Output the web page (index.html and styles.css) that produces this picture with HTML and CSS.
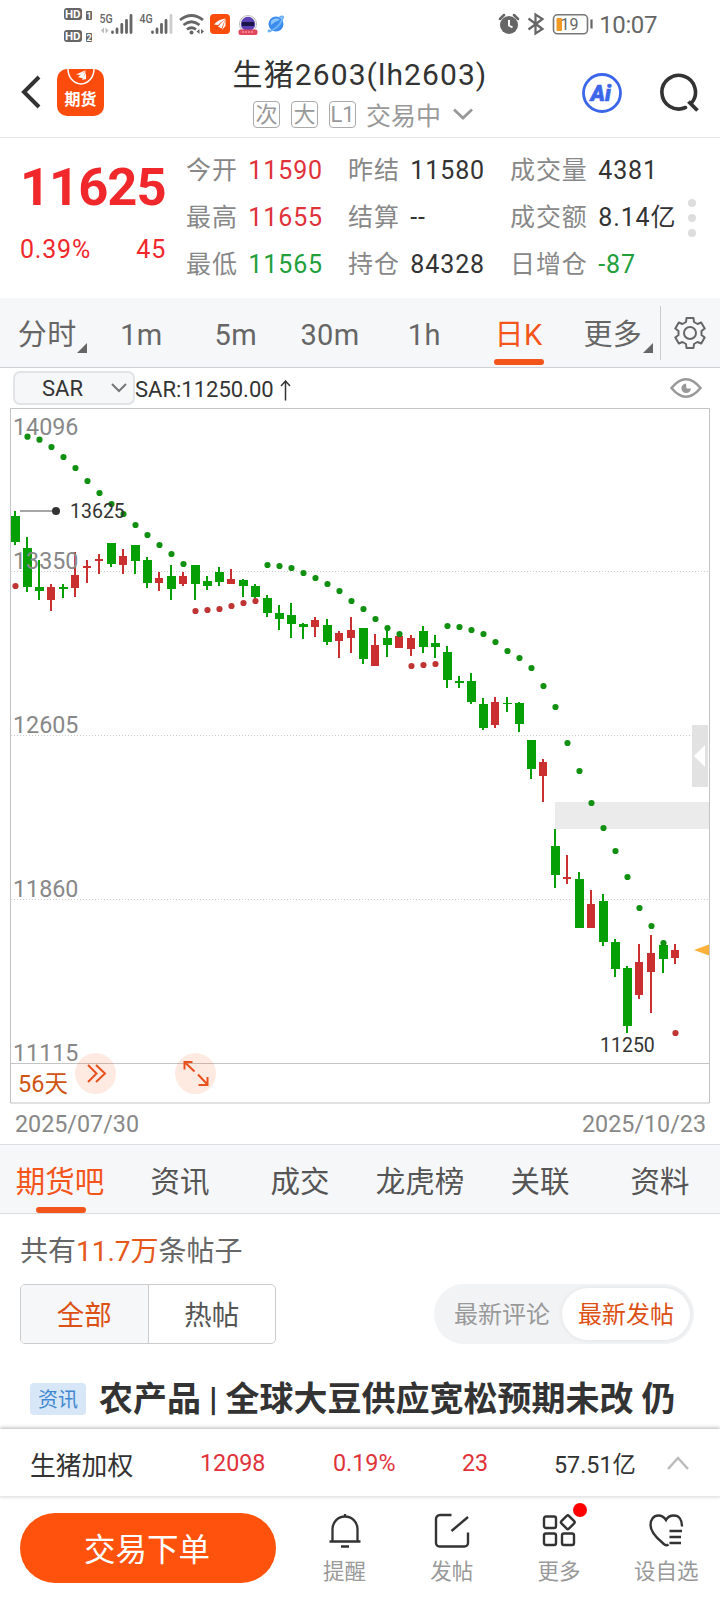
FILE: index.html
```html
<!DOCTYPE html>
<html lang="zh-CN">
<head>
    <meta charset="UTF-8">
    <meta name="viewport" content="width=device-width, initial-scale=1.0">
    <title>生猪2603(lh2603)</title>
    <link rel="stylesheet" href="styles.css">
</head>
<body>
    <div class="status-bar">
        <svg class="status-left" width="226" height="34" viewBox="62 6 226 34">
            <g fill="#666">
                <rect x="64" y="8" width="18" height="12" rx="3"/>
                <rect x="64" y="30" width="18" height="12" rx="3"/>
                <rect x="86" y="11" width="6" height="9" rx="1"/>
                <rect x="86" y="33" width="6" height="9" rx="1"/>
            </g>
            <g class="hd-text">
                <text x="65" y="18">HD</text>
                <text x="65" y="40">HD</text>
            </g>
            <g class="sim-text">
                <text x="86.500" y="18.500">1</text>
                <text x="86.500" y="40.500">2</text>
            </g>
            <text class="net-text" transform="translate(99.500 23) scale(.78 1)">5G</text>
            <text class="net-text" transform="translate(139.500 23) scale(.78 1)">4G</text>
            <g stroke="#666" stroke-width="2.800" stroke-linecap="round">
                <path d="M112.500 32.500v-.5M117 32.500v-3.500M121.800 32.500v-8M126.500 32.500v-12M131 32.500v-17"/>
                <path d="M152.500 32.500v-.5M157 32.500v-3.500M161.500 32.500v-8M166 32.500v-12"/>
                <path d="M171 32.500v-17" stroke="#ccc"/>
            </g>
            <path d="M104 27.500v6l-3-3zM105.500 33.500v-6l3 3z" fill="#bbb"/>
            <g fill="none" stroke="#666" stroke-width="2.800">
                <path d="M180 20q11.500-9 23 0"/>
                <path d="M183.500 25q8-6.500 16 0"/>
                <path d="M187 29.500q4.500-3.500 9 0"/>
            </g>
            <circle cx="191.500" cy="32.500" r="2" fill="#666"/>
            <path d="M199.500 29v5l-3-2.500zM201 34v-5l3 2.500z" fill="#666"/>
            <rect x="210" y="14" width="20" height="20" rx="4" fill="#fa4d0c"/>
            <path d="M214 24.500q4-5 11.500-6L218 25zM218 26.500l7.500-8-4 10zM222 30l3.500-11v7z" fill="#fff"/>
            <circle cx="248" cy="24" r="8.500" fill="#fff" stroke="#bbb"/>
            <circle cx="248" cy="24" r="7.200" fill="#5b41b4"/>
            <path d="M242 24h12" stroke="#191648" stroke-width="4"/>
            <rect x="238.500" y="29.500" width="19" height="5.500" rx="2" fill="#e4485c"/>
            <path d="M242 32h12" stroke="#f7b5bd" stroke-dasharray="2 1"/>
            <circle cx="276" cy="24" r="7.500" fill="#3c8cf0"/>
            <path d="M269.500 29.500q-3 4 4 0t9-11q2-3-3-1.500" fill="none" stroke="#6fb2f6" stroke-width="2"/>
            <path d="M271 21q5-5 9-1-5 1-9 5z" fill="#8cc6fa"/>
        </svg>
        <div class="status-right">
            <svg width="96" height="24" viewBox="498 12 96 24">
                <circle cx="509" cy="25" r="9" fill="#666"/>
                <path d="M500 19l4-4M518 19l-4-4" stroke="#666" stroke-width="2.500" stroke-linecap="round"/>
                <path d="M509 20v5.500l3.500 2" fill="none" stroke="#fff" stroke-width="2"/>
                <path d="M528.500 18.500l14 10.500-7 4.500V14.500l7 4.500-14 10.500" fill="none" stroke="#666" stroke-width="2.200"/>
                <rect x="553.500" y="14.800" width="34" height="19" rx="4" fill="none" stroke="#777" stroke-width="1.600"/>
                <rect x="556.500" y="18" width="5.500" height="13" rx="1" fill="#f29a26"/>
                <path d="M591.500 19.500v9" stroke="#666" stroke-width="2.200"/>
                <text class="battery-text" x="560.500" y="30">19</text>
            </svg>
            <span class="clock">10:07</span>
        </div>
    </div>

    <header class="header">
        <div class="header-left">
            <svg width="22" height="36" viewBox="0 0 22 36"><path d="M19 3L4 18l15 15" fill="none" stroke="#333" stroke-width="4"/></svg>
            <div class="logo">
                <svg width="28" height="17" viewBox="0 0 28 17">
                    <path d="M1 0a13 15 0 0 0 26 0" fill="none" stroke="#fff" stroke-width="1.500"/>
                    <path d="M9 5.500L19 1l-5 5zM11 8l8-6-3 7.500zM15 11l4-7v6z" fill="#fff"/>
                </svg>
                <span>期货</span>
            </div>
        </div>
        <div class="header-title">
            <h1>生猪2603(lh2603)</h1>
            <div class="subtitle">
                <span class="badge">次</span>
                <span class="badge">大</span>
                <span class="badge">L1</span>
                <span class="state">交易中</span>
                <svg width="20" height="12" viewBox="0 0 20 12"><path d="M1 1.500l9 8.500 9-8.500" fill="none" stroke="#999" stroke-width="2.800"/></svg>
            </div>
        </div>
        <div class="header-right">
            <svg width="40" height="40" viewBox="0 0 40 40">
                <circle cx="20" cy="20" r="18.500" fill="none" stroke="#3c66ea" stroke-width="2.800"/>
                <text class="ai-text" x="8.500" y="27.500">Ai</text>
            </svg>
            <svg width="40" height="40" viewBox="0 0 40 40">
                <path d="M25.500 34.500A16.800 16.800 0 1 1 31.500 30" fill="none" stroke="#333" stroke-width="3.600" stroke-linecap="round"/>
                <path d="M28.500 28.500l9 9" stroke="#333" stroke-width="3.800"/>
            </svg>
        </div>
    </header>

    <section class="quote">
        <div class="price">
            <div class="price-now">11625</div>
            <div class="price-change"><span>0.39%</span><span>45</span></div>
        </div>
        <dl class="quote-grid">
            <div><dt>今开</dt><dd class="up">11590</dd></div>
            <div><dt>昨结</dt><dd>11580</dd></div>
            <div><dt>成交量</dt><dd>4381</dd></div>
            <div><dt>最高</dt><dd class="up">11655</dd></div>
            <div><dt>结算</dt><dd>--</dd></div>
            <div><dt>成交额</dt><dd>8.14亿</dd></div>
            <div><dt>最低</dt><dd class="down">11565</dd></div>
            <div><dt>持仓</dt><dd>84328</dd></div>
            <div><dt>日增仓</dt><dd class="down">-87</dd></div>
        </dl>
        <div class="dots"><i></i><i></i><i></i></div>
    </section>

    <nav class="periods">
        <div class="period-list">
            <span class="has-menu">分时</span>
            <span>1m</span>
            <span>5m</span>
            <span>30m</span>
            <span>1h</span>
            <span class="active">日K</span>
            <span class="has-menu">更多</span>
        </div>
        <div class="settings">
            <svg width="32" height="34" viewBox="-16 -17 32 34" fill="none" stroke="#666" stroke-width="2" stroke-linejoin="round">
                <path d="M-4-11L-3.500-15H3.500L4-11L7.500-9L11.200-10.500L14.700-4.500L11.500-2V2L14.700 4.500L11.200 10.500L7.500 9L4 11L3.500 15H-3.500L-4 11L-7.500 9L-11.200 10.500L-14.700 4.500L-11.500 2V-2L-14.700-4.500L-11.200-10.500L-7.500-9Z"/>
                <circle r="6"/>
            </svg>
        </div>
    </nav>

    <div class="indicator">
        <div class="indicator-select">
            <span>SAR</span>
            <svg width="16" height="10" viewBox="0 0 16 10"><path d="M1 1l7 7 7-7" fill="none" stroke="#777" stroke-width="2"/></svg>
        </div>
        <span class="indicator-value">SAR:11250.00</span>
        <svg class="arrow-up" width="11" height="21" viewBox="0 0 11 21"><path d="M5.500 20.500V1M1 6L5.500 1 10 6" fill="none" stroke="#333" stroke-width="1.500"/></svg>
        <svg class="eye" width="32" height="20" viewBox="0 0 32 20">
            <path d="M1.500 10Q16-7.500 30.500 10 16 27.500 1.500 10z" fill="none" stroke="#999" stroke-width="2.500"/>
            <path d="M16 5.500a4.800 4.800 0 1 0 5 5h-4.500z" fill="#999"/>
        </svg>
    </div>

    <svg class="chart" id="chart" width="720" height="696" viewBox="0 408 720 696">
        <g stroke="#ccc" stroke-dasharray="1 2">
            <path d="M11 571.500h698M11 735.500h698M11 899.500h698"/>
        </g>
        <rect x="555" y="802" width="154" height="27" fill="#ebebeb"/>
        <path d="M10.500 408.500h699v694.500h-699zM10.500 1063.500h699" fill="none" stroke="#c4c4c4"/>
        <g id="candles"></g>
        <g id="sar"></g>
        <g class="axis-text">
            <text x="13" y="434.500">14096</text>
            <text x="13" y="569">13350</text>
            <text x="13" y="732.500">12605</text>
            <text x="13" y="896.500">11860</text>
            <text x="13" y="1061">11115</text>
        </g>
        <path d="M20 511h36" stroke="#888" stroke-width="1.500"/>
        <circle cx="56" cy="511" r="4" fill="#333"/>
        <text class="mark-text" x="70" y="518">13625</text>
        <text class="mark-text" x="600" y="1051.500">11250</text>
        <rect x="692" y="725" width="16" height="62" fill="#e2e2e2"/>
        <path d="M694 756l11-11v22z" fill="#fff"/>
        <path d="M694 950l15-5.500v11z" fill="#fbb03b"/>
        <text class="days-text" x="18" y="1091.500">56天</text>
        <circle cx="95.500" cy="1073.500" r="20.500" fill="#ff520d" fill-opacity=".12"/>
        <circle cx="195.500" cy="1073.500" r="20.500" fill="#ff520d" fill-opacity=".12"/>
        <g fill="none" stroke="#e8501c" stroke-width="2">
            <path d="M88 1065l8.500 8.500-8.500 8.500M96 1065l9 8.500-9 8.500"/>
            <path d="M184.500 1069.500v-7.500h8M184.500 1062l10 9.500M198 1074.500l9 9.500M207.500 1077v8h-9"/>
        </g>
    </svg>
    <div class="dates"><span>2025/07/30</span><span>2025/10/23</span></div>

    <nav class="tabs">
        <span class="active">期货吧</span>
        <span>资讯</span>
        <span>成交</span>
        <span>龙虎榜</span>
        <span>关联</span>
        <span>资料</span>
    </nav>

    <section class="posts">
        <div class="post-count">共有<em>11.7万</em>条帖子</div>
        <div class="filters">
            <div class="segment"><span class="active">全部</span><span>热帖</span></div>
            <div class="sort"><span>最新评论</span><span class="active">最新发帖</span></div>
        </div>
        <div class="post"><span class="tag">资讯</span><h2>农产品 | 全球大豆供应宽松预期未改 仍</h2></div>
    </section>

    <div class="ticker">
        <span>生猪加权</span>
        <span class="up">12098</span>
        <span class="up">0.19%</span>
        <span class="up">23</span>
        <span>57.51亿</span>
        <svg width="22" height="14" viewBox="0 0 22 14"><path d="M1 13L11 2l10 11" fill="none" stroke="#bbb" stroke-width="2.500"/></svg>
    </div>

    <footer class="actions">
        <button class="trade">交易下单</button>
        <div class="action">
            <svg width="36" height="36" viewBox="0 0 36 36" fill="none" stroke="#333" stroke-width="2.300">
                <path d="M18 1v3M5.500 28V16a12.500 12.500 0 0 1 25 0v12M2.500 28.500h31M14 33.500h8"/>
            </svg>
            <span>提醒</span>
        </div>
        <div class="action">
            <svg width="36" height="36" viewBox="0 0 36 36" fill="none" stroke="#333" stroke-width="2.400">
                <path d="M17.500 2H6a4 4 0 0 0-4 4v24a3.500 3.500 0 0 0 3.500 3.500h25A3.500 3.500 0 0 0 34 30V19.500M17.500 18L34 4"/>
            </svg>
            <span>发帖</span>
        </div>
        <div class="action more">
            <svg width="36" height="36" viewBox="0 0 36 36" fill="none" stroke="#333" stroke-width="2.400">
                <rect x="3" y="3.500" width="12" height="11.500" rx="2"/>
                <rect x="3" y="20.500" width="12" height="11.500" rx="2"/>
                <rect x="21" y="20.500" width="12" height="11.500" rx="2"/>
                <rect x="21.500" y="4" width="10.500" height="10.500" rx="1.500" transform="rotate(45 26.800 9.300)"/>
            </svg>
            <span>更多</span>
        </div>
        <div class="action">
            <svg width="36" height="36" viewBox="0 0 36 36" fill="none" stroke="#333" stroke-width="2.400">
                <path d="M34 13.500C34 6 30.500 2.500 26 2.500c-4 0-6.500 1.500-8 4.500C16 4 14 2.500 10.500 2.500 5.500 2.500 2.500 6.500 2.500 12c0 9 10 16 14 19.500q2 1.500 4 0M21.500 18H34M21.500 24H33M21.500 30H33"/>
            </svg>
            <span>设自选</span>
        </div>
    </footer>

    <script src="chart.js"></script>
</body>
</html>
```
FILE: styles.css
```css
* {
    box-sizing: border-box;
}
body {
    margin: 0;
    width: 720px;
    height: 1600px;
    overflow: hidden;
    display: flex;
    flex-direction: column;
    background: #fff;
    color: #333;
    font-family: Roboto, "Noto Sans CJK SC", sans-serif;
}
svg {
    display: block;
    flex: none;
}
.up {
    color: #e0323a;
}
.down {
    color: #21a03c;
}

/* status bar */
.status-bar {
    display: flex;
    justify-content: space-between;
    height: 48px;
    padding: 6px 63px 0 62px;
    color: #666;
}
.status-left {
    overflow: visible;
}
.status-right {
    display: flex;
    align-items: center;
    height: 36px;
    gap: 5px;
}
.clock {
    font-size: 24px;
    line-height: 36px;
    letter-spacing: -0.4px;
    padding-top: 2px;
}
.hd-text text {
    font: bold 11.5px Roboto, sans-serif;
    fill: #fff;
}
.sim-text text {
    font: bold 9px Roboto, sans-serif;
    fill: #fff;
}
.net-text {
    font: 500 13.5px Roboto, sans-serif;
    fill: #666;
}
.battery-text {
    font: 16px Roboto, sans-serif;
    fill: #666;
}

/* header */
.header {
    display: flex;
    justify-content: space-between;
    height: 90px;
    padding: 0 20px;
    border-bottom: 1px solid #e8e8e8;
}
.header-left {
    display: flex;
    align-items: center;
    gap: 15px;
    width: 150px;
    padding-bottom: 1px;
}
.logo {
    display: flex;
    flex-direction: column;
    align-items: center;
    width: 47px;
    height: 47px;
    border-radius: 10px;
    background: #fc4c0d;
}
.logo span {
    color: #fff;
    font-size: 16px;
    font-weight: bold;
    line-height: 28px;
}
.header-title {
    display: flex;
    flex-direction: column;
    align-items: center;
}
h1 {
    margin: 4px 0 0;
    font-size: 30px;
    font-weight: normal;
    line-height: 46px;
    letter-spacing: 1.1px;
}
.subtitle {
    display: flex;
    align-items: center;
    gap: 12px;
    height: 32px;
    padding-left: 6px;
    color: #999;
    font-size: 25px;
}
.badge {
    width: 27px;
    height: 27px;
    border: 1px solid #aaa;
    border-radius: 4px;
    font-size: 22px;
    line-height: 25px;
    text-align: center;
}
.badge + .badge {
    margin-left: -1px;
}
.state {
    margin-left: -2px;
}
.header-right {
    display: flex;
    justify-content: space-between;
    align-items: center;
    width: 118px;
    margin-left: 32px;
    padding-top: 1px;
}
.ai-text {
    font: italic 900 22px Roboto, sans-serif;
    fill: #3c66ea;
    stroke: #3c66ea;
    stroke-width: 0.6px;
}

/* quote */
.quote {
    display: flex;
    height: 160px;
}
.price {
    width: 166px;
    padding: 17px 0 0 20px;
    color: #f0282c;
}
.price-now {
    font-size: 52.5px;
    font-weight: bold;
    line-height: 64px;
    letter-spacing: -1px;
}
.price-change {
    display: flex;
    justify-content: space-between;
    margin-top: 13px;
    font-size: 25px;
    line-height: 36px;
    letter-spacing: 0.8px;
}
.quote-grid {
    display: grid;
    grid-template-columns: 162px 162px 170px;
    grid-auto-rows: 47px;
    margin: 9px 0 0 20px;
    font-size: 25px;
    line-height: 48px;
}
.quote-grid div {
    display: flex;
    gap: 10.5px;
    white-space: nowrap;
}
.quote-grid dt {
    color: #888;
    letter-spacing: 0.9px;
}
.quote-grid dd {
    margin: 0;
    letter-spacing: 0.9px;
}
.dots {
    display: flex;
    flex-direction: column;
    gap: 7px;
    padding-top: 61px;
    margin-left: 8px;
}
.dots i {
    width: 8px;
    height: 8px;
    border-radius: 50%;
    background: #ddd;
}

/* period tabs */
.periods {
    display: flex;
    height: 70px;
    background: #f6f7f9;
    border-bottom: 1px solid #cfd1d6;
    color: #666;
    font-size: 29px;
    line-height: 74px;
}
.period-list {
    display: grid;
    grid-template-columns: repeat(7, 1fr);
    width: 660px;
    text-align: center;
    letter-spacing: 0.4px;
}
.period-list span,
.tabs span {
    position: relative;
}
.has-menu::after {
    content: "";
    position: absolute;
    right: 7px;
    bottom: 19px;
    border-left: 10px solid transparent;
    border-bottom: 10px solid #666;
}
.periods .active,
.tabs .active {
    color: #f4551a;
}
.active::after {
    position: absolute;
    left: 50%;
    width: 50px;
    height: 6px;
    margin-left: -25px;
    border-radius: 3px;
    background: #f4551a;
}
.periods .active::after {
    content: "";
    bottom: 7px;
}
.settings {
    display: flex;
    align-items: center;
    justify-content: center;
    width: 60px;
    height: 54px;
    margin-top: 8px;
    padding-right: 2px;
    border-left: 1px solid #ccc;
}

/* indicator row */
.indicator {
    display: flex;
    align-items: flex-start;
    height: 40px;
    padding: 3px 18px 0 13px;
    font-size: 22px;
}
.indicator-select {
    display: flex;
    align-items: center;
    justify-content: space-between;
    width: 122px;
    height: 34px;
    padding: 0 6px 0 27px;
    border: 2px solid #e3e4e7;
    border-radius: 7px;
    background: #f6f7f9;
}
.indicator-value {
    line-height: 38px;
}
.arrow-up {
    margin: 9px 0 0 6px;
}
.eye {
    margin: 7px 0 0 auto;
}

/* chart */
.chart {
    font-family: Roboto, "Noto Sans CJK SC", sans-serif;
}
.axis-text {
    font-size: 23.3px;
    fill: #888;
}
.mark-text {
    font-size: 19.5px;
    fill: #333;
}
.days-text {
    font-size: 23.5px;
    fill: #d05514;
}
.dates {
    display: flex;
    justify-content: space-between;
    height: 40px;
    padding: 0 14px 0 15px;
    color: #888;
    font-size: 23.3px;
    line-height: 41px;
}

/* section tabs */
.tabs {
    display: grid;
    grid-template-columns: repeat(6, 1fr);
    height: 70px;
    background: #f6f7f9;
    border: 1px solid #dcdee2;
    border-width: 1px 0;
    color: #555;
    font-size: 29.5px;
    line-height: 75px;
    text-align: center;
}
.tabs .active::after {
    content: "";
    bottom: 7px;
    margin-left: -24px;
}

/* posts */
.posts {
    height: 215px;
    padding: 14px 20px 0;
    overflow: hidden;
}
.post-count {
    height: 46px;
    color: #666;
    font-size: 28px;
    line-height: 47px;
}
.post-count em {
    color: #e5581a;
    font-style: normal;
}
.filters {
    display: flex;
    justify-content: space-between;
    margin: 10px 6px 0 0;
}
.segment {
    display: flex;
    width: 256px;
    height: 60px;
    border: 1px solid #ccc;
    border-radius: 5px;
    overflow: hidden;
    color: #555;
    font-size: 27.5px;
    line-height: 62px;
    text-align: center;
}
.segment span {
    flex: 1;
}
.segment .active {
    border-right: 1px solid #ccc;
    background: #f6f7f9;
    color: #dd5013;
}
.sort {
    display: flex;
    width: 260px;
    height: 60px;
    padding: 4px;
    border-radius: 30px;
    background: #f2f3f5;
    color: #999;
    font-size: 24px;
    line-height: 54px;
    text-align: center;
}
.sort span {
    width: 124px;
    padding-left: 4px;
    flex: none;
}
.sort .active {
    width: 128px;
    padding: 0;
    border-radius: 26px;
    background: #fff;
    color: #dd5013;
    box-shadow: 0 0 5px rgba(0,0,0,0.08);
}
.post {
    display: flex;
    align-items: center;
    height: 58px;
    margin: 26px 0 0 10px;
}
.tag {
    width: 56px;
    height: 32px;
    border-radius: 4px;
    background: #d8e7f8;
    color: #4187d0;
    font-size: 20px;
    line-height: 34px;
    text-align: center;
}
h2 {
    margin: 0 0 0 13px;
    font-size: 34px;
    font-weight: bold;
    line-height: 50px;
    white-space: nowrap;
    word-spacing: -0.5px;
}

/* ticker */
.ticker {
    display: grid;
    grid-template-columns: 170px 133px 129px 92px 113px 22px;
    align-items: center;
    height: 68px;
    padding: 1px 0 0 30px;
    background: #fff;
    border-bottom: 1px solid #e6e8ea;
    box-shadow: 0 -1px 4px rgba(0,0,0,0.3);
    font-size: 23.3px;
    z-index: 1;
}
.ticker span:first-child {
    font-size: 25.8px;
}

/* bottom actions */
.actions {
    display: flex;
    height: 103px;
    padding: 16px 0 0 20px;
}
.trade {
    width: 256px;
    height: 70px;
    margin-right: 15px;
    padding: 0 2px 2px 0;
    border: none;
    border-radius: 35px;
    background: #ff520d;
    color: #fff;
    font-family: inherit;
    font-size: 31.5px;
}
.action {
    position: relative;
    display: flex;
    flex: 1;
    flex-direction: column;
    align-items: center;
    color: #999;
    font-size: 21.5px;
    line-height: 32px;
}
.action span {
    margin-top: 7px;
}
.more::after {
    content: "";
    position: absolute;
    left: 67px;
    top: -10px;
    width: 14px;
    height: 14px;
    border-radius: 50%;
    background: #f00;
}
```
FILE: chart.js
```js
const SVG_NS = 'http://www.w3.org/2000/svg';
const STEP = 12;
const FIRST_X = 15;
const GREEN = '#06a006';
const RED = '#cb3030';

// direction, high, body top, body bottom, low
const candles = [
    ['g', 511, 516, 542, 545], ['g', 537, 548, 587, 592], ['g', 560, 587, 591, 600], ['r', 584, 587, 600, 611],
    ['g', 584, 587, 589, 598], ['r', 552, 575, 588, 597], ['r', 560, 566, 568, 583], ['r', 554, 559, 561, 574],
    ['g', 543, 543, 564, 567], ['r', 549, 556, 565, 574], ['g', 545, 545, 561, 574], ['g', 557, 560, 583, 588],
    ['r', 572, 578, 583, 591], ['g', 565, 576, 589, 600], ['r', 572, 576, 584, 586], ['g', 565, 565, 584, 600],
    ['g', 576, 581, 586, 590], ['g', 567, 572, 582, 586], ['r', 569, 579, 584, 584], ['g', 579, 580, 586, 597],
    ['g', 584, 586, 597, 600], ['g', 595, 598, 613, 617], ['g', 605, 613, 619, 630], ['g', 603, 615, 624, 638],
    ['g', 623, 624, 627, 639], ['r', 617, 620, 627, 637], ['g', 619, 625, 642, 645], ['r', 631, 633, 641, 658],
    ['r', 617, 630, 638, 653], ['g', 628, 628, 659, 664], ['r', 634, 645, 666, 666], ['g', 630, 638, 645, 657],
    ['r', 635, 636, 648, 648], ['r', 635, 638, 649, 656], ['g', 626, 631, 647, 653], ['g', 635, 643, 647, 658],
    ['g', 646, 652, 680, 688], ['g', 676, 681, 683, 688], ['g', 673, 681, 702, 704], ['g', 698, 704, 728, 730],
    ['r', 697, 702, 725, 728], ['g', 697, 703, 704, 712], ['g', 702, 703, 724, 732], ['g', 740, 740, 769, 779],
    ['r', 759, 762, 776, 802], ['g', 829, 846, 875, 888], ['r', 855, 877, 879, 884], ['g', 872, 879, 928, 928],
    ['r', 890, 904, 928, 928], ['g', 894, 901, 942, 946], ['g', 939, 942, 969, 977], ['g', 966, 968, 1026, 1033],
    ['r', 944, 962, 995, 999], ['r', 935, 953, 972, 1013], ['g', 943, 945, 959, 973], ['r', 944, 950, 958, 964]
];

const sar = [
    586, 436.7, 439.7, 447, 457, 468, 481, 493, 504, 514, 525, 535, 545, 554, 564,
    611, 610, 609, 606, 603, 601,
    565, 566, 568, 573, 578, 584, 591, 601, 609, 619, 628, 634,
    666, 665, 664,
    626, 627, 630, 634, 642, 651, 658, 668, 686, 707, 743, 771, 803, 828, 851, 877, 908, 926, 943,
    1033
];

function add(parent, name, attrs) {
    const el = document.createElementNS(SVG_NS, name);
    for (const key in attrs) {
        el.setAttribute(key, attrs[key]);
    }
    parent.appendChild(el);
}

const candleGroup = document.getElementById('candles');
candles.forEach(([dir, high, top, bottom, low], i) => {
    const x = FIRST_X + i * STEP;
    const fill = dir === 'g' ? GREEN : RED;
    add(candleGroup, 'rect', { x: x - 1, y: high, width: 2, height: low - high, fill });
    add(candleGroup, 'rect', { x: x - 4, y: top, width: dir === 'g' ? 9 : 8, height: bottom - top, fill });
});

const sarGroup = document.getElementById('sar');
sar.forEach((cy, i) => {
    // SAR below the candle means an up trend
    const fill = cy > candles[i][3] ? '#c03434' : '#129012';
    add(sarGroup, 'circle', { cx: FIRST_X + 0.5 + i * STEP, cy, r: 3.1, fill });
});
```
